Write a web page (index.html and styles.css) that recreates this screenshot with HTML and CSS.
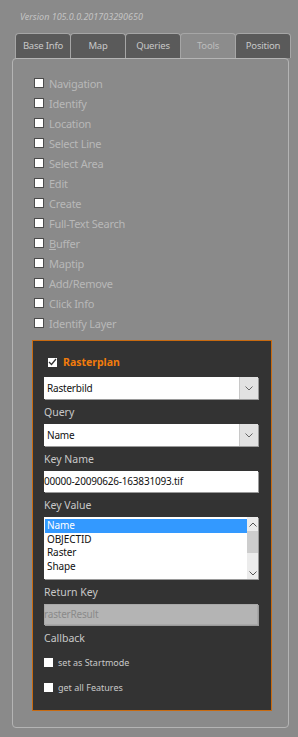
FILE: index.html
```html
<!DOCTYPE html>
<html lang="en">
<head>
    <meta charset="utf-8">
    <title>Tools</title>
    <link rel="stylesheet" href="styles.css">
</head>
<body>
<div class="version">Version 105.0.0.201703290650</div>

<div class="tabs">
    <div class="tab">Base Info</div>
    <div class="tab">Map</div>
    <div class="tab">Queries</div>
    <div class="tab active">Tools</div>
    <div class="tab">Position</div>
</div>

<div class="panel">
    <ul class="tools">
        <li><span class="box"></span>Navigation</li>
        <li><span class="box"></span>Identify</li>
        <li><span class="box"></span>Location</li>
        <li><span class="box"></span>Select Line</li>
        <li><span class="box"></span>Select Area</li>
        <li><span class="box"></span>Edit</li>
        <li><span class="box"></span>Create</li>
        <li><span class="box"></span>Full-Text Search</li>
        <li><span class="box"></span><u>B</u>uffer</li>
        <li><span class="box"></span>Maptip</li>
        <li><span class="box"></span>Add/Remove</li>
        <li><span class="box"></span>Click Info</li>
        <li><span class="box"></span>Identify Layer</li>
    </ul>

    <div class="raster">
        <div class="raster-head">
            <span class="check">
                <svg width="9" height="8" viewBox="0 0 9 8"><path d="M1 4 L3.5 6.5 L8 1" fill="none" stroke="#333" stroke-width="1.3"/></svg>
            </span>
            Rasterplan
        </div>

        <div class="select first">
            <span class="value">Rasterbild</span>
            <span class="arrow"><svg width="8" height="5" viewBox="0 0 8 5"><path d="M0.5 0.5 L4 4 L7.5 0.5" fill="none" stroke="#666" stroke-width="1"/></svg></span>
        </div>

        <div class="label">Query</div>
        <div class="select">
            <span class="value">Name</span>
            <span class="arrow"><svg width="8" height="5" viewBox="0 0 8 5"><path d="M0.5 0.5 L4 4 L7.5 0.5" fill="none" stroke="#666" stroke-width="1"/></svg></span>
        </div>

        <div class="label">Key Name</div>
        <div class="field">00000-20090626-163831093.tif</div>

        <div class="label">Key Value</div>
        <div class="listbox">
            <ul class="items">
                <li class="selected">Name</li>
                <li>OBJECTID</li>
                <li>Raster</li>
                <li>Shape</li>
            </ul>
            <div class="scroll">
                <svg width="8" height="5" viewBox="0 0 8 5"><path d="M0.5 4.5 L4 1 L7.5 4.5" fill="none" stroke="#555" stroke-width="1"/></svg>
                <span class="thumb"></span>
                <svg width="8" height="5" viewBox="0 0 8 5"><path d="M0.5 0.5 L4 4 L7.5 0.5" fill="none" stroke="#555" stroke-width="1"/></svg>
            </div>
        </div>

        <div class="label">Return Key</div>
        <div class="field disabled">rasterResult</div>

        <div class="label">Callback</div>
        <div class="option"><span class="sq"></span>set as Startmode</div>
        <div class="option"><span class="sq"></span>get all Features</div>
    </div>
</div>
</body>
</html>
```

FILE: styles.css
```css
body {
    margin: 0;
    background-color: #8a8a8a;
    font-family: 'Segoe UI', 'Noto Sans', 'Open Sans', sans-serif;
    width: 298px;
    height: 737px;
    overflow: hidden;
}
.version {
    font-size: 9px;
    font-style: italic;
    color: #c4c4c4;
    padding: 10px 0 0 20px;
    height: 13px;
}
.tabs {
    display: flex;
    margin: 10px 0 0 15px;
    width: 275px;
}
.tab {
    flex: 1;
    height: 24px;
    line-height: 24px;
    text-align: center;
    font-size: 9.5px;
    letter-spacing: -0.2px;
    color: #c8c8c8;
    background-color: #5a5a5a;
    border: 1px solid #a6a6a6;
    border-bottom: none;
    border-radius: 4px 4px 0 0;
    margin-right: -1px;
}
.tab.active {
    background-color: #8c8c8c;
    color: #bdbdbd;
}
.panel {
    margin: 0 9px 0 12px;
    height: 670px;
    border: 1px solid #b4b4b4;
    border-radius: 4px;
    box-sizing: border-box;
    padding: 14px 0 0 19px;
}
.tools {
    list-style: none;
    margin: 0;
    padding: 0;
}
.tools li {
    height: 20px;
    display: flex;
    align-items: center;
    font-size: 11px;
    letter-spacing: -0.25px;
    color: #b8b8b8;
}
.box {
    width: 8px;
    height: 8px;
    background-color: #fff;
    border: 1px solid #4c4c4c;
    margin: 0 5px 0 2px;
}
.raster {
    margin-top: 7px;
    width: 240px;
    height: 371px;
    box-sizing: border-box;
    background-color: #333333;
    border: 1px solid #c86a10;
    padding: 11px 13px 0 11px;
}
.raster-head {
    display: flex;
    align-items: center;
    height: 20px;
    font-size: 10.5px;
    font-weight: bold;
    color: #f27c0c;
    margin-left: 4px;
}
.check {
    width: 9px;
    height: 9px;
    background-color: #fff;
    margin-right: 6px;
    display: flex;
    align-items: center;
    justify-content: center;
}
.select {
    display: flex;
    height: 22px;
    margin-top: 3px;
    background-color: #fff;
    box-shadow: 1px 1px 0 #9a9a9a;
    font-size: 10px;
    letter-spacing: -0.2px;
    color: #111;
}
.select.first {
    margin-top: 5px;
}
.select .value {
    flex: 1;
    padding-left: 3px;
    line-height: 22px;
}
.select .arrow {
    width: 18px;
    background-color: #e2e2e2;
    border-left: 1px solid #c8c8c8;
    display: flex;
    align-items: center;
    justify-content: center;
}
.label {
    font-size: 10.5px;
    color: #c8c8c8;
    margin-top: 4px;
    height: 18px;
    line-height: 18px;
}
.field {
    height: 21px;
    line-height: 21px;
    background-color: #fff;
    box-shadow: 1px 1px 0 #9a9a9a;
    font-size: 10px;
    letter-spacing: -0.2px;
    color: #111;
    margin-top: 3px;
}
.field.disabled {
    background-color: #b4b4b4;
    color: #8a8a8a;
    box-shadow: 1px 1px 0 #9a9a9a, inset 0 0 0 1px #a8a8a8;
}
.listbox {
    display: flex;
    height: 62px;
    margin-top: 3px;
    background-color: #fff;
    box-shadow: 1px 1px 0 #9a9a9a;
    padding: 2px 0 0 1px;
    box-sizing: border-box;
}
.items {
    list-style: none;
    margin: 0;
    padding: 0;
    flex: 1;
}
.items li {
    height: 13.6px;
    line-height: 13.6px;
    font-size: 10px;
    letter-spacing: -0.1px;
    color: #111;
    padding-left: 2px;
}
.items li.selected {
    background-color: #3399ff;
    color: #fff;
}
.scroll {
    width: 11px;
    margin-top: -2px;
    background-color: #ececec;
    display: flex;
    flex-direction: column;
    align-items: center;
    padding: 5px 0 3px;
    box-sizing: border-box;
}
.thumb {
    width: 11px;
    height: 22px;
    margin: 4px 0 auto;
    background-color: #cdcdcd;
}
.option {
    display: flex;
    align-items: center;
    height: 25px;
    font-size: 9px;
    color: #c8c8c8;
}
.label + .option {
    margin-top: 3px;
}
.sq {
    width: 9px;
    height: 9px;
    background-color: #fff;
    margin-right: 5px;
}
```
